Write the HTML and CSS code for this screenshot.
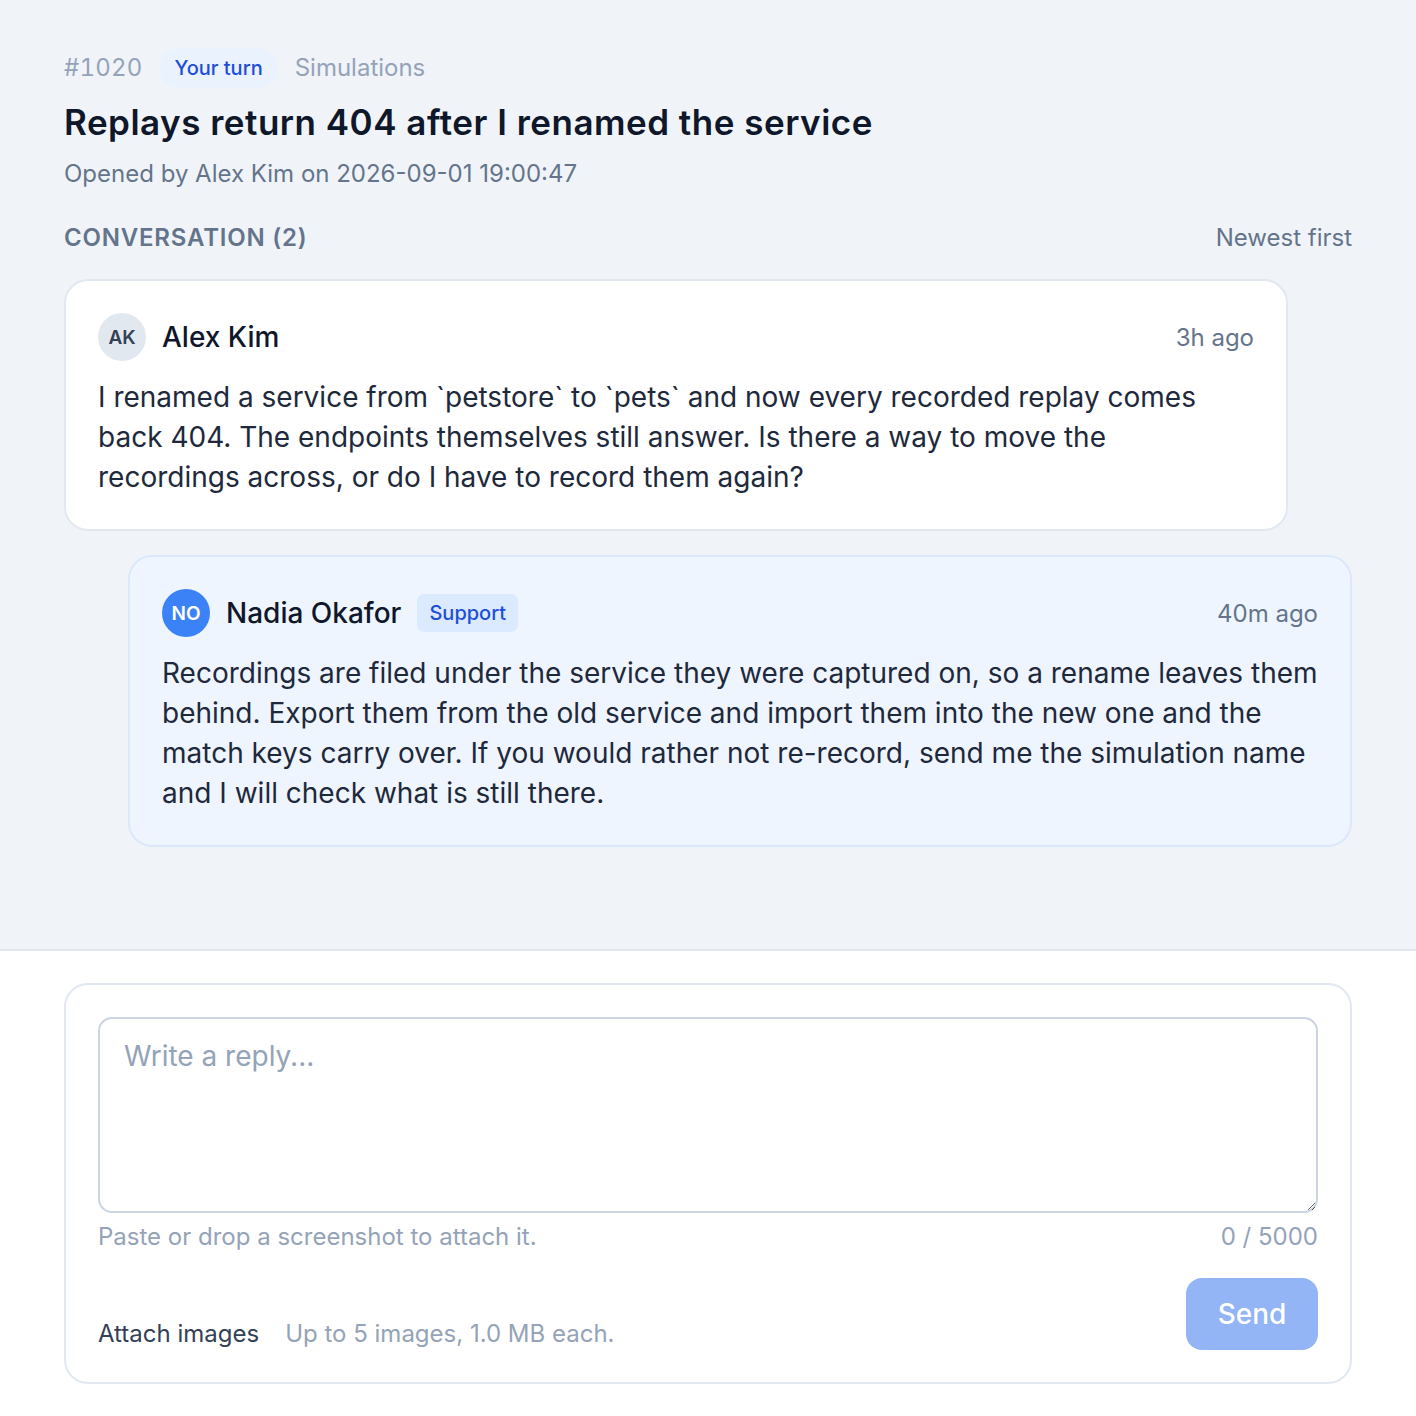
FILE: index.html
```html
<!DOCTYPE html>
<html lang="en">
<head>
<meta charset="utf-8">
<title>#1020 Replays return 404 after I renamed the service</title>
<link rel="stylesheet" href="styles.css">
</head>
<body>
<div class="app">
  <main class="thread">
    <div class="meta">
      <span class="ticket-id">#1020</span>
      <span class="pill">Your turn</span>
      <span class="category">Simulations</span>
    </div>
    <h1 class="title">Replays return 404 after I renamed the service</h1>
    <p class="opened">Opened by Alex Kim on 2026-09-01 19:00:47</p>

    <div class="conv-head">
      <span class="conv-label">CONVERSATION (2)</span>
      <span class="sort">Newest first</span>
    </div>

    <div class="messages">
      <article class="msg msg-user">
        <header class="msg-head">
          <span class="avatar avatar-user">AK</span>
          <span class="author">Alex Kim</span>
          <span class="time">3h ago</span>
        </header>
        <p class="msg-body">I renamed a service from `petstore` to `pets` and now every recorded replay comes back 404. The endpoints themselves still answer. Is there a way to move the recordings across, or do I have to record them again?</p>
      </article>

      <article class="msg msg-staff">
        <header class="msg-head">
          <span class="avatar avatar-staff">NO</span>
          <span class="author">Nadia Okafor</span>
          <span class="badge">Support</span>
          <span class="time">40m ago</span>
        </header>
        <p class="msg-body">Recordings are filed under the service they were captured on, so a rename leaves them behind. Export them from the old service and import them into the new one and the match keys carry over. If you would rather not re-record, send me the simulation name and I will check what is still there.</p>
      </article>
    </div>
  </main>

  <footer class="composer">
    <form class="reply-card">
      <textarea class="reply-input" placeholder="Write a reply..."></textarea>
      <div class="hint-row">
        <span class="hint">Paste or drop a screenshot to attach it.</span>
        <span class="count">0 / 5000</span>
      </div>
      <div class="action-row">
        <div class="attach">
          <span class="attach-label">Attach images</span>
          <span class="attach-note">Up to 5 images, 1.0 MB each.</span>
        </div>
        <button type="button" class="send" disabled>Send</button>
      </div>
    </form>
  </footer>
</div>
</body>
</html>
```

FILE: styles.css
```css
* { box-sizing: border-box; }

html, body {
  margin: 0;
  padding: 0;
}

body {
  font-family: Inter, "Noto Sans", "Liberation Sans", sans-serif;
  color: #1e293b;
  background: #ffffff;
}

.app {
  height: 100vh;
  display: flex;
  flex-direction: column;
}

.thread {
  flex: 1;
  background: #f0f4f9;
  padding: 48px 64px 0;
}

.meta {
  display: flex;
  align-items: center;
  gap: 17px;
  font-size: 24px;
  line-height: 40px;
  height: 40px;
}

.ticket-id {
  color: #94a3b8;
  font-variant-numeric: tabular-nums;
  letter-spacing: 0.2px;
}

.pill {
  background: #eaf2fe;
  color: #1d4ed8;
  font-size: 20px;
  font-weight: 500;
  padding: 0 15px;
  border-radius: 999px;
}

.category { color: #94a3b8; }

.title {
  margin: 12px 0 0;
  font-size: 35px;
  line-height: 44px;
  font-weight: 600;
  color: #0f172a;
  letter-spacing: 0.5px;
}

.opened {
  margin: 14px 0 0;
  font-size: 24px;
  line-height: 32px;
  color: #64748b;
}

.conv-head {
  margin-top: 32px;
  display: flex;
  justify-content: space-between;
  align-items: center;
  font-size: 24px;
  line-height: 32px;
  color: #64748b;
}

.conv-label {
  font-weight: 600;
  letter-spacing: 0.8px;
}

.messages {
  margin-top: 25px;
  display: flex;
  flex-direction: column;
  gap: 24px;
}

.msg {
  width: calc(100% - 64px);
  border-radius: 24px;
  padding: 32px 31px 32px 32px;
}

.msg-user {
  background: #ffffff;
  border: 2px solid #e2e8f0;
}

.msg-staff {
  margin-left: 64px;
  background: #eef5ff;
  border: 2px solid #dbe8fb;
}

.msg-head {
  display: flex;
  align-items: center;
  gap: 16px;
  height: 48px;
}

.avatar {
  width: 48px;
  height: 48px;
  border-radius: 50%;
  display: inline-flex;
  align-items: center;
  justify-content: center;
  font-size: 19px;
  font-weight: 600;
  flex: none;
}

.avatar-user {
  background: #e2e8f0;
  color: #334155;
}

.avatar-staff {
  background: #3b82f6;
  color: #ffffff;
}

.author {
  font-size: 28px;
  font-weight: 500;
  color: #0f172a;
}

.badge {
  background: #dbeafe;
  color: #1d4ed8;
  font-size: 20px;
  font-weight: 500;
  line-height: 38px;
  padding: 0 12px;
  border-radius: 7px;
}

.time {
  margin-left: auto;
  margin-right: 1px;
  font-size: 24px;
  color: #64748b;
}

.msg-body {
  margin: 16px 0 0;
  font-size: 28px;
  line-height: 40px;
  color: #1e293b;
}

.composer {
  background: #ffffff;
  border-top: 2px solid #e2e8f0;
  padding: 32px 64px 32px;
}

.reply-card {
  border: 2px solid #e2e8f0;
  border-radius: 24px;
  padding: 32px;
  margin: 0;
}

.reply-input {
  display: block;
  width: 100%;
  height: 196px;
  border: 2px solid #cbd5e1;
  border-radius: 14px;
  padding: 18px 24px;
  font-family: Inter, "Noto Sans", "Liberation Sans", sans-serif;
  font-size: 28px;
  line-height: 38px;
  color: #1e293b;
  background: #ffffff;
  resize: vertical;
  outline: none;
}

.reply-input::placeholder { color: #94a3b8; }

.hint-row {
  display: flex;
  justify-content: space-between;
  margin-top: 8px;
  font-size: 24px;
  line-height: 32px;
  color: #94a3b8;
}

.action-row {
  margin-top: 25px;
  display: flex;
  justify-content: space-between;
  align-items: center;
}

.attach {
  display: flex;
  gap: 26px;
  font-size: 24px;
  line-height: 32px;
  padding-top: 40px;
}

.attach-label { color: #334155; }
.attach-note { color: #94a3b8; }

.send {
  width: 132px;
  height: 72px;
  border: none;
  border-radius: 16px;
  background: #93b4f5;
  color: #ffffff;
  font-family: Inter, "Noto Sans", "Liberation Sans", sans-serif;
  font-size: 28px;
  font-weight: 500;
}
```
